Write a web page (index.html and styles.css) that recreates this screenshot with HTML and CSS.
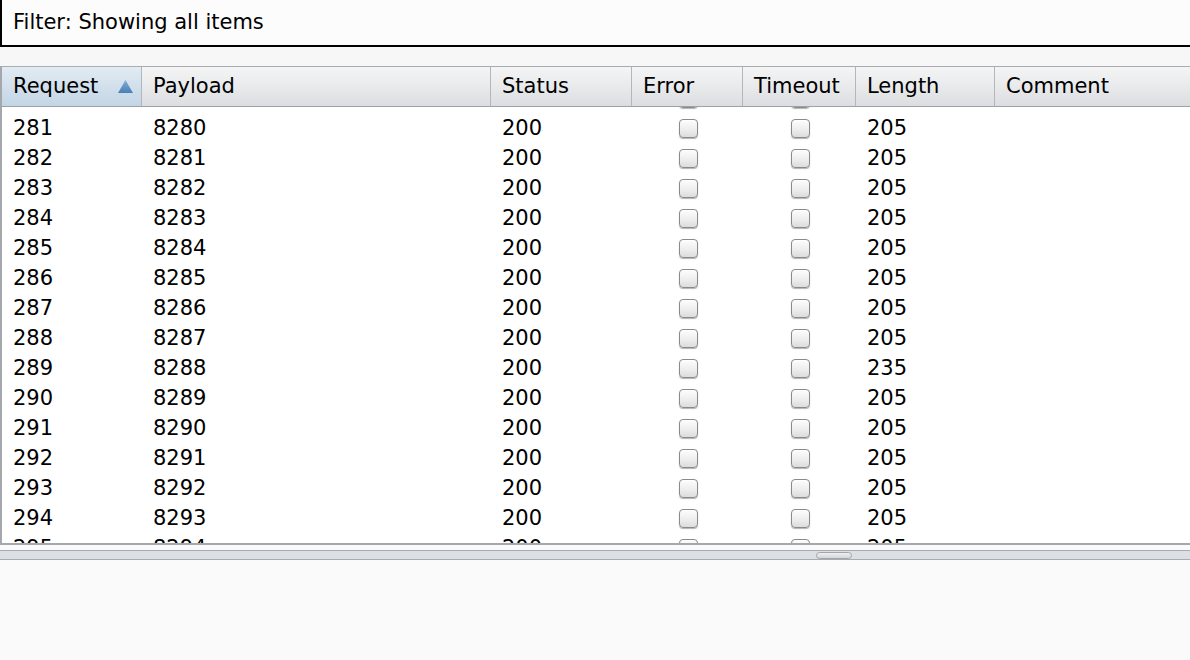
FILE: index.html
```html
<!DOCTYPE html>
<html>
<head>
<meta charset="utf-8">
<link rel="stylesheet" href="styles.css">
</head>
<body>
<div class="filter">Filter: Showing all items</div>
<div class="gap"></div>
<div class="table">
  <div class="thead grid">
    <div class="th sel">Request<svg class="arrow" width="15" height="13" viewBox="0 0 15 13"><defs><linearGradient id="ag" x1="0" y1="0" x2="0" y2="1"><stop offset="0" stop-color="#7eaed8"/><stop offset="1" stop-color="#4a80b5"/></linearGradient></defs><polygon points="7.5,0 15,13 0,13" fill="url(#ag)"/></svg></div>
    <div class="th">Payload</div>
    <div class="th">Status</div>
    <div class="th">Error</div>
    <div class="th">Timeout</div>
    <div class="th">Length</div>
    <div class="th last">Comment</div>
  </div>
  <div class="tbody">
    <div class="rows" id="rows"></div>
  </div>
</div>
<div class="split"><div class="knob"></div></div>
<div class="bottom"></div>
<script src="app.js"></script>
</body>
</html>
```

FILE: app.js
```js
var rows = document.getElementById('rows');
var html = '';
for (var i = 280; i <= 295; i++) {
  var len = i === 289 ? 235 : 205;
  var partial = i === 280;
  html += '<div class="row grid">' +
    '<div class="td">' + (partial ? '' : i) + '</div>' +
    '<div class="td">' + (partial ? '' : (i + 7999)) + '</div>' +
    '<div class="td">' + (partial ? '' : '200') + '</div>' +
    '<div class="td cb"><span class="box err"></span></div>' +
    '<div class="td cb"><span class="box tmo"></span></div>' +
    '<div class="td">' + (partial ? '' : len) + '</div>' +
    '<div class="td"></div>' +
    '</div>';
}
rows.innerHTML = html;
```

FILE: styles.css
```css
html, body {
  margin: 0;
  padding: 0;
  background: #fbfafb;
  font-family: "DejaVu Sans", "Liberation Sans", sans-serif;
  font-size: 21px;
  color: #000;
  overflow: hidden;
}

.filter {
  height: 45px;
  line-height: 44px;
  box-sizing: content-box;
  background: #fdfcfd;
  border-left: 2px solid #000;
  border-bottom: 2px solid #000;
  padding-left: 11px;
  white-space: nowrap;
}

.gap {
  height: 19px;
  background: #f7f7f7;
}

.table {
  border-top: 1px solid #a9adb2;
  border-left: 2px solid #a4a8ad;
  border-bottom: 2px solid #a4a8ad;
  background: #fff;
}

.grid {
  display: grid;
  grid-template-columns: 140px 349px 141px 111px 113px 139px 1fr;
}

.thead {
  height: 39px;
  background: linear-gradient(#f4f4f5, #e9eaeb 50%, #dcdde0);
  border-bottom: 1px solid #9ea2a7;
}

.th {
  box-sizing: border-box;
  border-right: 1px solid #b3b6ba;
  padding-left: 11px;
  line-height: 39px;
  display: flex;
  align-items: center;
  justify-content: space-between;
  padding-right: 8px;
  white-space: nowrap;
}

.th.last {
  border-right: none;
}

.th.sel {
  background: linear-gradient(#e2ebf3, #d2e0ec 50%, #c3d5e5);
}

.arrow {
  display: block;
}

.tbody {
  height: 436px;
  overflow: hidden;
}

.rows {
  margin-top: -24px;
}

.row {
  height: 30px;
  line-height: 30px;
}

.td {
  padding-left: 11px;
  white-space: nowrap;
}

.td.cb {
  padding-left: 0;
  display: flex;
  align-items: center;
}

.box {
  width: 17px;
  height: 17px;
  border: 1px solid #8a8a8a;
  border-radius: 4px;
  background: linear-gradient(#fdfdfd, #ececec 60%, #dcdcdc);
  box-shadow: 0 1px 1px rgba(0,0,0,0.3), inset 0 1px 0 #fff;
}

.box.err {
  margin-left: 47px;
}

.box.tmo {
  margin-left: 48px;
}

.split {
  margin-top: 5px;
  height: 8px;
  border-top: 1px solid #a9abb0;
  border-bottom: 1px solid #a9abb0;
  background: #dcdfe3;
  display: flex;
  justify-content: center;
}

.knob {
  width: 34px;
  height: 5px;
  margin-left: 478px;
  margin-top: 1px;
  border: 1px solid #a2a5aa;
  border-radius: 4px;
  background: linear-gradient(#eef0f2, #d2d5da);
}

.bottom {
  height: 120px;
  background: #fbfafb;
}
```
